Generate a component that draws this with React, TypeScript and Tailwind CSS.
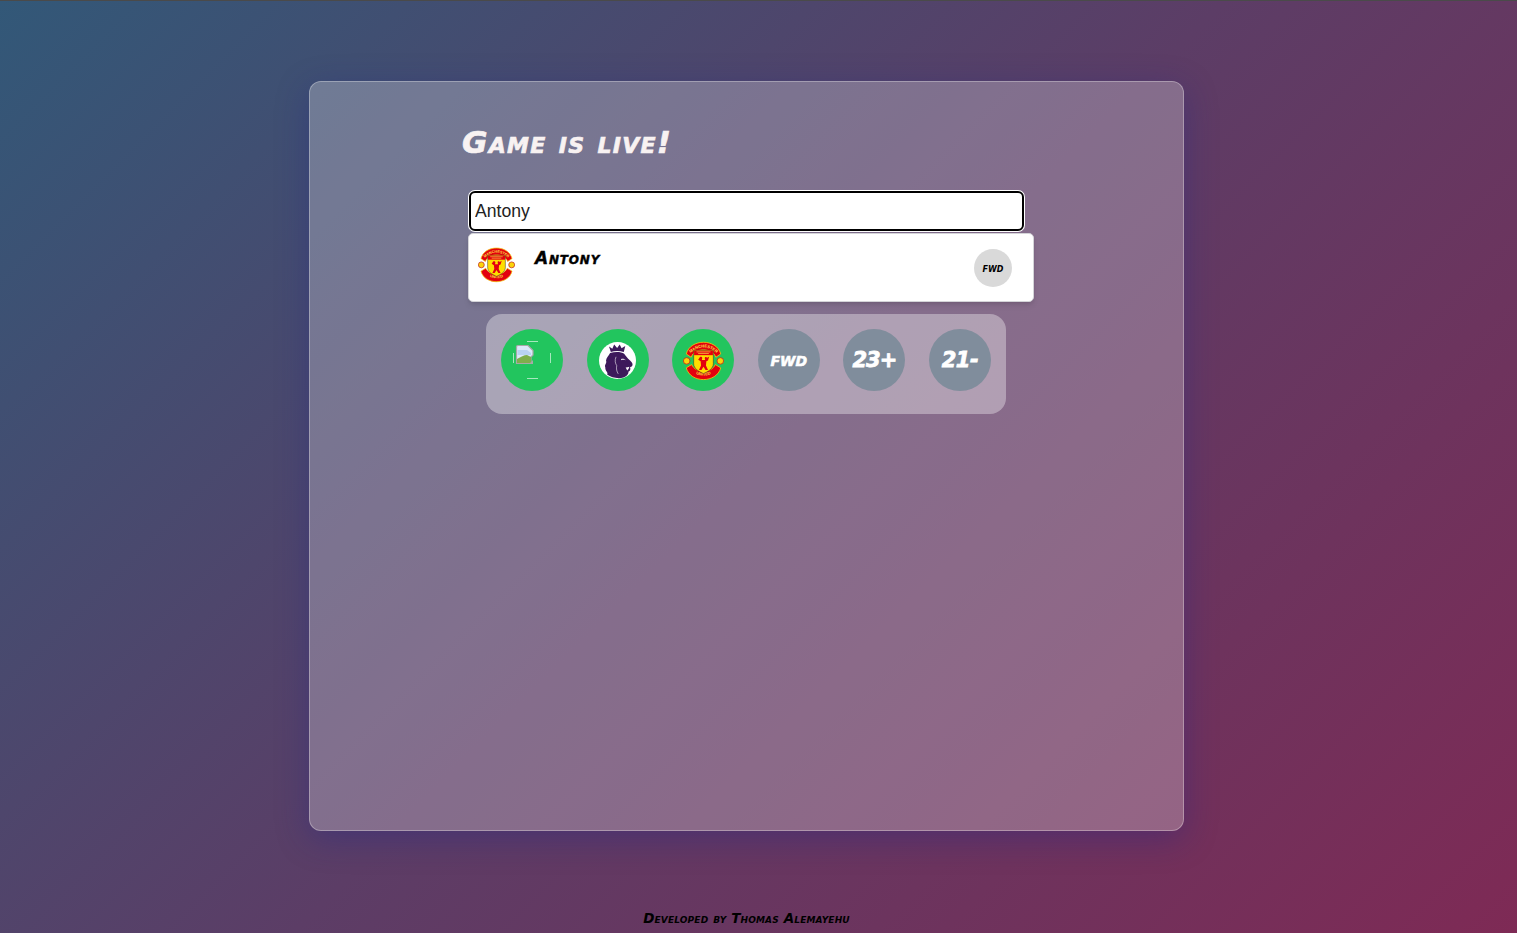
import React from "react";

const marker = "font-['DejaVu_Sans',sans-serif] font-bold italic [font-variant:small-caps]";

const Crest = ({ size }: { size: number }) => (
  <svg width={size} height={size} viewBox="0 0 100 100">
    <defs>
      <path id="topArc" d="M16 34 Q50 2 84 34" />
      <path id="botArc" d="M20 76 Q50 98 80 76" />
    </defs>
    {/* top scroll */}
    <path d="M8 34 C18 -4 82 -4 92 34 L80 42 C72 18 28 18 20 42 Z" fill="#e3000f" stroke="#f6c40c" strokeWidth="2" />
    <text fontFamily="'Liberation Sans',sans-serif" fontSize="10" fontWeight="700" fill="#fde047">
      <textPath href="#topArc" startOffset="50%" textAnchor="middle">MANCHESTER</textPath>
    </text>
    {/* bottom scroll */}
    <path d="M8 68 L21 60 C32 82 68 82 79 60 L92 68 C82 106 18 106 8 68 Z" fill="#e3000f" stroke="#f6c40c" strokeWidth="2" />
    <text fontFamily="'Liberation Sans',sans-serif" fontSize="10" fontWeight="700" fill="#fde047">
      <textPath href="#botArc" startOffset="50%" textAnchor="middle">UNITED</textPath>
    </text>
    {/* footballs */}
    <circle cx="9" cy="51" r="8" fill="#fbd40a" stroke="#c0281f" strokeWidth="2" />
    <circle cx="91" cy="51" r="8" fill="#fbd40a" stroke="#c0281f" strokeWidth="2" />
    {/* shield */}
    <path d="M26 25 H74 V58 C74 70 61 77 50 82 C39 77 26 70 26 58 Z" fill="#ffdd00" stroke="#222222" strokeWidth="1.2" />
    <rect x="27" y="26" width="46" height="11" fill="#e3000f" />
    <path d="M33 29 h34 M37 33 h26" stroke="#fde047" strokeWidth="1.6" />
    {/* devil */}
    <path d="M41 42 C43 40 47 41 47 44 L46 49 H54 L53 44 C53 41 57 40 59 43 L64 40 L61 50 L57 52 L56 62 L61 73 H55 L50 65 L45 73 H39 L44 62 L43 52 L37 48 Z" fill="#e3000f" />
  </svg>
);

const PremierLion = () => (
  <svg width="37" height="37" viewBox="0 0 100 100">
    <circle cx="50" cy="50" r="50" fill="#ffffff" />
    {/* crown */}
    <path d="M32 27 L27 12 L36 18 L41 7 L49 16 L56 7 L61 17 L71 11 L67 27 C56 23 42 23 32 27 Z" fill="#3d195b" />
    {/* head and mane */}
    <path d="M30 30 C44 25 60 26 68 32 C73 38 76 44 84 50 C90 56 92 60 90 64 C88 67 85 67 84 68 C86 74 84 78 80 80 C80 88 74 93 66 96 C52 100 34 97 22 88 C26 82 16 78 17 68 C14 62 22 58 19 50 C20 42 26 38 30 30 Z" fill="#3d195b" />
    <path d="M60 46 C65 44 69 46 72 49 C67 48 64 48 60 49 Z M72 69 C76 69 79 68 82 67 C81 72 79 75 76 77 C75 74 74 72 72 69 Z" fill="#ffffff" />
    <path d="M46 40 C42 50 44 58 48 64 C46 72 48 80 52 86" fill="none" stroke="#ffffff" strokeWidth="1.5" />
  </svg>
);

// the image that did not load: browser's torn page icon plus a faint frame clipped by the circle
const BrokenImage = () => (
  <svg width="38" height="38" viewBox="0 0 38 38">
    <path d="M14 0.5 H25 M0.5 12 V22 M37.5 12 V22 M14 37.5 H25" stroke="#ffffff" strokeOpacity="0.6" strokeWidth="1" />
    <path d="M3.5 5.5 Q3.5 4.5 5 4.5 H15 L20 9.5 V14 L18 16 V22.5 H3.5 Z" fill="#dbe8fa" stroke="#a8a8a8" strokeWidth="1.2" />
    <path d="M4.5 9 H14 L18 12 V14 H4.5 Z" fill="#b9d2f2" />
    <path d="M4 22 V18 C8 16 11 14 14 14 L18 16 V22 Z" fill="#7fae4c" />
    <path d="M20 19 V23 H16 Z" fill="#a8a8a8" />
  </svg>
);

const Circle = ({ tone, children }: { tone: "green" | "gray"; children: React.ReactNode }) => (
  <div
    className={
      tone === "green"
        ? "w-[62px] h-[62px] rounded-full bg-[#22c55e] flex items-center justify-center"
        : "w-[62px] h-[62px] rounded-full bg-[#808d9c] flex items-center justify-center"
    }
  >
    {children}
  </div>
);

export default function App() {
  return (
    <div className="h-[933px] overflow-hidden flex flex-col bg-[linear-gradient(135deg,#325878_0%,#5c3d66_50%,#7e2a55_100%)]">
      <div className="w-full h-px bg-[#4a4a4a]" />

      <div className="pr-6 flex flex-col items-center">
        <main className="mt-[80px] w-[875px] h-[750px] shrink-0 rounded-xl border border-white/30 bg-white/25 shadow-[0_8px_32px_rgba(31,38,135,0.37)] flex flex-col items-center">
          <div className="w-[569px] flex flex-col items-start">
            <h1 className={`${marker} mt-[36px] text-[31px] leading-[48px] tracking-[1.3px] text-[#f8f2f2] [-webkit-text-stroke:0.7px_#f8f2f2]`}>
              Game is live!
            </h1>

            <div className="mt-[25px] ml-[7px] flex flex-col">
              <input
                readOnly
                value="Antony"
                className="w-[555px] h-[40px] px-[4px] rounded-md bg-white border-2 border-black shadow-[0_0_0_1px_#ffffff] outline-none text-[17.6px] text-[#222222] font-['Liberation_Sans',sans-serif]"
              />
              <div className="mt-[2px] -ml-px w-[566px] h-[69px] rounded-[5px] bg-white border border-[#d4d4d8] shadow-md flex items-start pl-[9px] pr-[21px] pt-[12px]">
                <Crest size={37} />
                <span className={`${marker} ml-[20px] mt-[2px] text-[17px] leading-5 tracking-[0.8px] text-black [-webkit-text-stroke:0.4px_#000000]`}>Antony</span>
                <div className="ml-auto mt-[3px] w-[38px] h-[38px] rounded-full bg-[#d9d9d9] flex items-center justify-center">
                  <span className={`${marker} -mt-[1px] text-[12px] text-black`}>fwd</span>
                </div>
              </div>
            </div>

            <div className="mt-[12px] ml-[24px] w-[520px] h-[100px] rounded-2xl bg-white/35 flex items-start justify-between px-[15px] pt-[15px]">
              <Circle tone="green"><BrokenImage /></Circle>
              <Circle tone="green"><PremierLion /></Circle>
              <Circle tone="green"><Crest size={41} /></Circle>
              <Circle tone="gray"><span className={`${marker} -mt-[3px] text-white text-[20px] [-webkit-text-stroke:0.6px_#ffffff]`}>fwd</span></Circle>
              <Circle tone="gray"><span className={`${marker} mt-[2px] text-white text-[21px] tracking-[-1px] [-webkit-text-stroke:0.8px_#ffffff]`}>23+</span></Circle>
              <Circle tone="gray"><span className={`${marker} mt-[2px] text-white text-[21px] tracking-[-0.5px] [-webkit-text-stroke:0.8px_#ffffff]`}>21-</span></Circle>
            </div>
          </div>
        </main>

        <footer className={`${marker} mt-[79px] text-[13.5px] leading-4 tracking-[0.15px] text-black`}>Developed by Thomas Alemayehu</footer>
      </div>
    </div>
  );
}
